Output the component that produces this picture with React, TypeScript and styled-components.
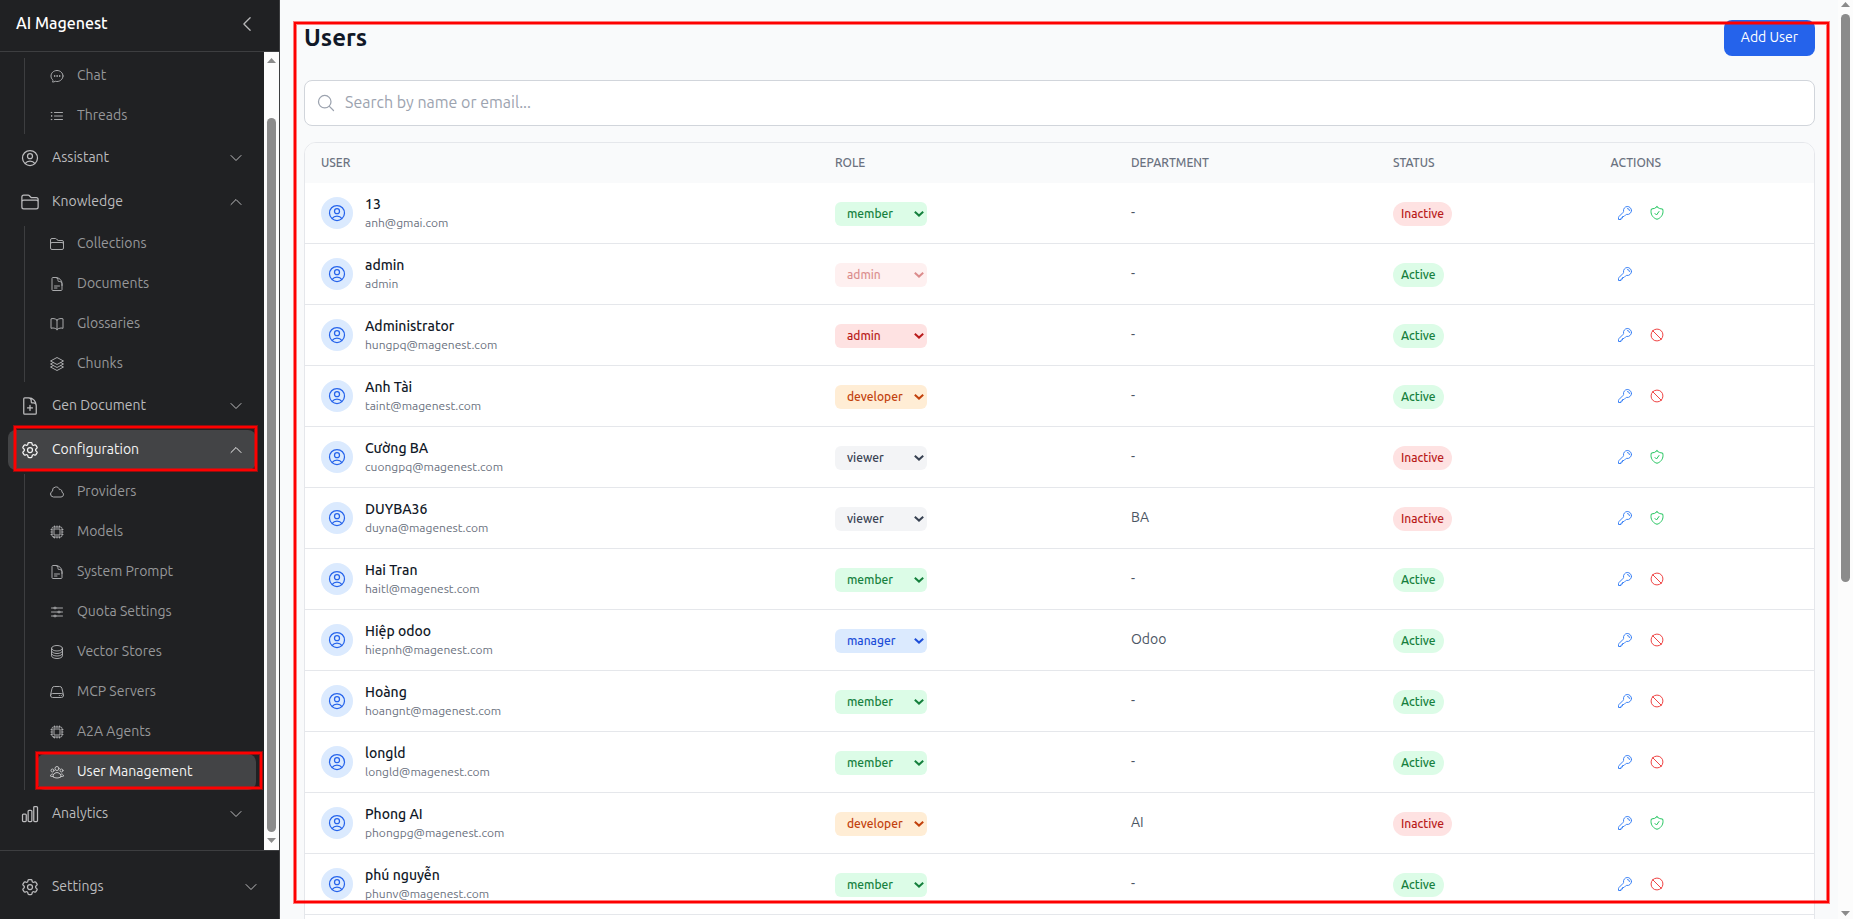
import React from 'react';
import styled, { createGlobalStyle, css } from 'styled-components';
import {
  HiOutlineAdjustmentsHorizontal,
  HiOutlineBookOpen,
  HiOutlineChartBar,
  HiOutlineChatBubbleOvalLeftEllipsis,
  HiOutlineChevronDown,
  HiOutlineChevronLeft,
  HiOutlineChevronUp,
  HiOutlineCircleStack,
  HiOutlineCloud,
  HiOutlineCog6Tooth,
  HiOutlineCpuChip,
  HiOutlineDocumentPlus,
  HiOutlineDocumentText,
  HiOutlineFolder,
  HiOutlineKey,
  HiOutlineListBullet,
  HiOutlineMagnifyingGlass,
  HiOutlineNoSymbol,
  HiOutlineServer,
  HiOutlineShieldCheck,
  HiOutlineSquare3Stack3D,
  HiOutlineUserCircle,
  HiOutlineUserGroup,
} from 'react-icons/hi2';

const GlobalStyle = createGlobalStyle`
  *, *::before, *::after { box-sizing: border-box; }
  html, body { margin: 0; padding: 0; overflow: hidden; }
  body {
    font-family: Ubuntu, "Noto Sans", "Open Sans", sans-serif;
    font-size: 14px;
    line-height: 20px;
    background: #f9fafb;
  }
  svg { display: block; flex: none; }
`;

const Layout = styled.div`
  position: relative;
  display: flex;
  width: 1853px;
  height: 919px;
  overflow: hidden;
`;

const Sidebar = styled.aside`
  display: flex;
  flex-direction: column;
  flex: none;
  width: 280px;
  background: #202123;
  border-right: 1px solid #3d3e40;
`;

const Brand = styled.header`
  display: flex;
  align-items: center;
  justify-content: space-between;
  flex: none;
  height: 52px;
  padding: 0 22px 3px 16px;
  border-bottom: 1px solid #3d3e40;
  color: #fff;
  svg { color: #b9b9bb; }
`;

const BrandName = styled.span`
  padding-bottom: 2px;
  font-size: 16px;
  font-weight: 500;
`;

const NavArea = styled.div`
  display: flex;
  flex: 1;
  min-height: 0;
`;

const Nav = styled.nav`
  display: flex;
  flex-direction: column;
  gap: 4px;
  flex: 1;
  padding: 6px 8px 0;
`;

const NavItem = styled.a<{ $active?: boolean }>`
  display: flex;
  align-items: center;
  gap: 12px;
  flex: none;
  height: 40px;
  padding: 0 12px;
  border-radius: 8px;
  color: ${p => (p.$active ? '#f4f4f4' : '#bcbcbe')};
  background: ${p => (p.$active ? '#434446' : 'transparent')};
`;

const NavLabel = styled.span`
  flex: 1;
  padding-bottom: 2px;
`;

const SubNav = styled.div`
  display: flex;
  flex-direction: column;
  gap: 4px;
  margin-left: 16px;
  padding-left: 12px;
  border-left: 1px solid #3d3e40;
`;

const SubItem = styled(NavItem)`
  height: 36px;
  color: ${p => (p.$active ? '#f4f4f4' : '#97989a')};
  svg { color: ${p => (p.$active ? '#c5c5c6' : '#a9aaac')}; }
`;

const Footer = styled.footer`
  flex: none;
  height: 69px;
  padding: 16px 8px 0;
  border-top: 1px solid #3d3e40;
`;

const Track = styled.div<{ $bg: string; $top: number; $bottom: number }>`
  display: flex;
  flex-direction: column;
  align-items: center;
  flex: none;
  width: 15px;
  padding: ${p => p.$top}px 0 ${p => p.$bottom}px;
  background: ${p => p.$bg};
`;

const Thumb = styled.div<{ $top: number; $height: number }>`
  width: 9px;
  height: ${p => p.$height}px;
  margin: ${p => p.$top}px 0 auto;
  border-radius: 5px;
  background: #8b8b8b;
`;

const Main = styled.main`
  flex: 1;
  min-width: 0;
  padding: 20px 23px 0 24px;
`;

const PageHead = styled.div`
  display: flex;
  align-items: center;
  justify-content: space-between;
  height: 36px;
  margin-bottom: 24px;
`;

const Title = styled.h1`
  margin: 0;
  padding-bottom: 1px;
  font-size: 24px;
  line-height: 32px;
  font-weight: 700;
  color: #111827;
`;

const AddButton = styled.button`
  width: 91px;
  height: 36px;
  padding: 0 0 2px;
  border: 0;
  border-radius: 8px;
  background: #2563eb;
  color: #fff;
  font: inherit;
  white-space: nowrap;
`;

const SearchBox = styled.label`
  display: flex;
  align-items: center;
  gap: 9px;
  height: 46px;
  margin-bottom: 16px;
  padding: 0 11px;
  border: 1px solid #d1d5db;
  border-radius: 8px;
  background: #fff;
  color: #9ca3af;
`;

const Placeholder = styled.span`
  padding-bottom: 2px;
  font-size: 16px;
  line-height: 24px;
`;

const Table = styled.section`
  height: 900px;
  border: 1px solid #e5e7eb;
  border-radius: 12px;
  background: #fff;
  overflow: hidden;
`;

const Row = styled.div`
  display: grid;
  grid-template-columns: 514px 296px 262px 217.6px 1fr;
  align-items: center;
  height: 61px;
  border-bottom: 1px solid #e5e7eb;
`;

const HeadRow = styled(Row)`
  height: 40px;
  border-bottom: 0;
  background: #f9fafb;
  font-size: 12px;
  line-height: 16px;
  font-weight: 500;
  color: #6b7280;
`;

const Cell = styled.div`
  display: flex;
  align-items: center;
  padding: 0 16px;
`;

const Avatar = styled.div`
  display: grid;
  place-items: center;
  width: 32px;
  height: 32px;
  margin-right: 12px;
  border-radius: 50%;
  background: #dbeafe;
  color: #2563eb;
`;

const Name = styled.div`
  padding-bottom: 2px;
  line-height: 18px;
  font-weight: 500;
  color: #111827;
`;

const Email = styled.div`
  font-size: 12px;
  line-height: 16px;
  color: #6b7280;
`;

const Department = styled.span`
  padding-bottom: 2px;
  color: #4b5563;
`;

const tones = {
  member: css`background: #dcfce7; color: #15803d;`,
  admin: css`background: #fee2e2; color: #b91c1c;`,
  developer: css`background: #ffedd5; color: #c2410c;`,
  viewer: css`background: #f3f4f6; color: #374151;`,
  manager: css`background: #dbeafe; color: #1d4ed8;`,
};
type Role = keyof typeof tones;

const RoleSelect = styled.div<{ $role: Role; $disabled?: boolean }>`
  display: flex;
  align-items: center;
  justify-content: space-between;
  width: 92px;
  height: 24px;
  margin-top: 2px;
  padding: 0 3px 1px 12px;
  border-radius: 6px;
  font-size: 12px;
  line-height: 16px;
  font-weight: 500;
  opacity: ${p => (p.$disabled ? 0.5 : 1)};
  ${p => tones[p.$role]}
`;

const Badge = styled.span<{ $active: boolean }>`
  width: ${p => (p.$active ? 51 : 59)}px;
  height: 24px;
  margin-top: 2px;
  padding: 3.5px 0 0 8px;
  border-radius: 12px;
  font-size: 12px;
  line-height: 16px;
  font-weight: 500;
  ${p => (p.$active ? tones.member : tones.admin)}
`;

const ActionButton = styled.button<{ $color: string }>`
  display: grid;
  place-items: center;
  width: 28px;
  height: 28px;
  margin-right: 4px;
  padding: 0;
  border: 0;
  background: none;
  color: ${p => p.$color};
`;

const Marker = styled.div<{ $x: number; $y: number; $w: number; $h: number }>`
  position: absolute;
  left: ${p => p.$x}px;
  top: ${p => p.$y}px;
  width: ${p => p.$w}px;
  height: ${p => p.$h}px;
  border: 2px solid #fe0000;
  box-shadow: 0 0 0 1px rgba(254, 0, 0, 0.5), inset 0 0 0 1px rgba(254, 0, 0, 0.5);
  pointer-events: none;
`;

const Arrow = ({ up }: { up?: boolean }) => (
  <svg width="9" height="5" viewBox="0 0 9 5" fill="#8b8b8b">
    <path d={up ? 'M4.5 0 9 5H0z' : 'M0 0h9L4.5 5z'} />
  </svg>
);

const Caret = () => (
  <svg width="10" height="6" viewBox="0 0 10 6" fill="none" stroke="currentColor" strokeWidth="2">
    <path d="M.8.8 5 4.6 9.2.8" />
  </svg>
);

type Icon = React.ComponentType<{ size?: number }>;
type Section = { label: string; icon: Icon; active?: boolean; items?: [string, Icon][] };

const startItems: [string, Icon][] = [
  ['Chat', HiOutlineChatBubbleOvalLeftEllipsis],
  ['Threads', HiOutlineListBullet],
];

const sections: Section[] = [
  { label: 'Assistant', icon: HiOutlineUserCircle },
  {
    label: 'Knowledge',
    icon: HiOutlineFolder,
    items: [
      ['Collections', HiOutlineFolder],
      ['Documents', HiOutlineDocumentText],
      ['Glossaries', HiOutlineBookOpen],
      ['Chunks', HiOutlineSquare3Stack3D],
    ],
  },
  { label: 'Gen Document', icon: HiOutlineDocumentPlus },
  {
    label: 'Configuration',
    icon: HiOutlineCog6Tooth,
    active: true,
    items: [
      ['Providers', HiOutlineCloud],
      ['Models', HiOutlineCpuChip],
      ['System Prompt', HiOutlineDocumentText],
      ['Quota Settings', HiOutlineAdjustmentsHorizontal],
      ['Vector Stores', HiOutlineCircleStack],
      ['MCP Servers', HiOutlineServer],
      ['A2A Agents', HiOutlineCpuChip],
      ['User Management', HiOutlineUserGroup],
    ],
  },
  { label: 'Analytics', icon: HiOutlineChartBar },
];

type User = { name: string; email: string; role: Role; dept?: string; active: boolean; self?: boolean };

const users: User[] = [
  { name: '13', email: 'anh@gmai.com', role: 'member', active: false },
  { name: 'admin', email: 'admin', role: 'admin', active: true, self: true },
  { name: 'Administrator', email: 'hungpq@magenest.com', role: 'admin', active: true },
  { name: 'Anh Tài', email: 'taint@magenest.com', role: 'developer', active: true },
  { name: 'Cường BA', email: 'cuongpq@magenest.com', role: 'viewer', active: false },
  { name: 'DUYBA36', email: 'duyna@magenest.com', role: 'viewer', dept: 'BA', active: false },
  { name: 'Hai Tran', email: 'haitl@magenest.com', role: 'member', active: true },
  { name: 'Hiệp odoo', email: 'hiepnh@magenest.com', role: 'manager', dept: 'Odoo', active: true },
  { name: 'Hoàng', email: 'hoangnt@magenest.com', role: 'member', active: true },
  { name: 'longld', email: 'longld@magenest.com', role: 'member', active: true },
  { name: 'Phong AI', email: 'phongpg@magenest.com', role: 'developer', dept: 'AI', active: false },
  { name: 'phú nguyễn', email: 'phunv@magenest.com', role: 'member', active: true },
];

const SubList = ({ items }: { items: [string, Icon][] }) => (
  <SubNav>
    {items.map(([label, ItemIcon]) => (
      <SubItem key={label} $active={label === 'User Management'}>
        <ItemIcon size={16} />
        <NavLabel>{label}</NavLabel>
      </SubItem>
    ))}
  </SubNav>
);

const UserRow = ({ user }: { user: User }) => (
  <Row>
    <Cell>
      <Avatar><HiOutlineUserCircle size={20} /></Avatar>
      <div>
        <Name>{user.name}</Name>
        <Email>{user.email}</Email>
      </div>
    </Cell>
    <Cell>
      <RoleSelect $role={user.role} $disabled={user.self}>
        {user.role}
        <Caret />
      </RoleSelect>
    </Cell>
    <Cell><Department>{user.dept ?? '-'}</Department></Cell>
    <Cell><Badge $active={user.active}>{user.active ? 'Active' : 'Inactive'}</Badge></Cell>
    <Cell>
      <ActionButton $color="#3b82f6"><HiOutlineKey size={16} /></ActionButton>
      {!user.self && (
        <ActionButton $color={user.active ? '#ef4444' : '#22c55e'}>
          {user.active ? <HiOutlineNoSymbol size={16} /> : <HiOutlineShieldCheck size={16} />}
        </ActionButton>
      )}
    </Cell>
  </Row>
);

export default function App() {
  return (
    <Layout>
      <GlobalStyle />
      <Sidebar>
        <Brand>
          <BrandName>AI Magenest</BrandName>
          <HiOutlineChevronLeft size={20} />
        </Brand>
        <NavArea>
          <Nav>
            <SubList items={startItems} />
            {sections.map(({ label, icon: SectionIcon, active, items }) => (
              <React.Fragment key={label}>
                <NavItem $active={active}>
                  <SectionIcon size={20} />
                  <NavLabel>{label}</NavLabel>
                  {items ? <HiOutlineChevronUp size={16} /> : <HiOutlineChevronDown size={16} />}
                </NavItem>
                {items && <SubList items={items} />}
              </React.Fragment>
            ))}
          </Nav>
          <Track $bg="#fcfcfc" $top={6} $bottom={7}>
            <Arrow up />
            <Thumb $top={55} $height={714} />
            <Arrow />
          </Track>
        </NavArea>
        <Footer>
          <NavItem>
            <HiOutlineCog6Tooth size={20} />
            <NavLabel>Settings</NavLabel>
            <HiOutlineChevronDown size={16} />
          </NavItem>
        </Footer>
      </Sidebar>
      <Main>
        <PageHead>
          <Title>Users</Title>
          <AddButton>Add User</AddButton>
        </PageHead>
        <SearchBox>
          <HiOutlineMagnifyingGlass size={20} />
          <Placeholder>Search by name or email...</Placeholder>
        </SearchBox>
        <Table>
          <HeadRow>
            {['USER', 'ROLE', 'DEPARTMENT', 'STATUS', 'ACTIONS'].map(h => <Cell key={h}>{h}</Cell>)}
          </HeadRow>
          {users.map(u => <UserRow key={u.name} user={u} />)}
        </Table>
      </Main>
      <Track $bg="#fcfcfc" $top={2} $bottom={3}>
        <Arrow up />
        <Thumb $top={7} $height={568} />
        <Arrow />
      </Track>
      <Marker $x={14} $y={426} $w={243} $h={45} />
      <Marker $x={36} $y={752} $w={226} $h={37} />
      <Marker $x={294} $y={22} $w={1535} $h={881} />
    </Layout>
  );
}
